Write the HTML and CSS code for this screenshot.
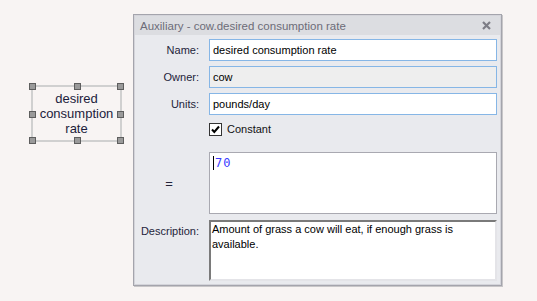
FILE: index.html
```html
<!DOCTYPE html>
<html>
<head>
<meta charset="utf-8">
<link rel="stylesheet" href="styles.css">
</head>
<body>
<div class="canvas">
  <div class="node">
    <div class="node-label">desired<br>consumption<br>rate</div>
    <span class="h h-tl"></span><span class="h h-tc"></span><span class="h h-tr"></span>
    <span class="h h-ml"></span><span class="h h-mr"></span>
    <span class="h h-bl"></span><span class="h h-bc"></span><span class="h h-br"></span>
  </div>

  <div class="dialog">
    <div class="titlebar">
      <span class="title">Auxiliary - cow.desired consumption rate</span>
      <svg class="close" width="9" height="9" viewBox="0 0 9 9"><path d="M1 1 L8 8 M8 1 L1 8" stroke="#7d7d86" stroke-width="2.2" fill="none"/></svg>
    </div>
    <div class="form">
      <label class="lbl">Name:</label>
      <div class="field blue">desired consumption rate</div>

      <label class="lbl">Owner:</label>
      <div class="field blue ro">cow</div>

      <label class="lbl">Units:</label>
      <div class="field blue">pounds/day</div>

      <span></span>
      <div class="check-row">
        <svg class="checkbox" width="13" height="13" viewBox="0 0 13 13"><rect x="0.5" y="0.5" width="12" height="12" fill="#fff" stroke="#333"/><path d="M3 6.5 L5.3 9 L10 3.5" stroke="#000" stroke-width="2" fill="none"/></svg>
        <span>Constant</span>
      </div>

      <label class="lbl eq-lbl">=</label>
      <div class="eq"><span class="caret"></span><span class="eq-text">70</span></div>

      <label class="lbl desc-lbl">Description:</label>
      <div class="desc">Amount of grass a cow will eat, if enough grass is available.</div>
    </div>
  </div>
</div>
</body>
</html>
```

FILE: styles.css
```css
html, body {
  margin: 0;
  padding: 0;
  background: #f8f4f3;
}
body {
  width: 537px;
  height: 301px;
  overflow: hidden;
  font-family: "Liberation Sans", Arial, sans-serif;
}
.canvas {
  position: relative;
  width: 537px;
  height: 301px;
}
.node {
  position: absolute;
  left: 31px;
  top: 85px;
  width: 91px;
  height: 57px;
  box-sizing: border-box;
  border: 2px solid #d0d0d0;
  display: flex;
  align-items: center;
  justify-content: center;
}
.node-label {
  font-size: 13px;
  line-height: 15px;
  color: #1c1c3c;
  text-align: center;
}
.h {
  position: absolute;
  width: 5px;
  height: 5px;
  border: 1px solid #5e5e5e;
  background: #9a9a9a;
}
.h-tl { left: -4px; top: -4px; }
.h-tc { left: 41px; top: -4px; }
.h-tr { right: -4px; top: -4px; }
.h-ml { left: -4px; top: 24px; }
.h-mr { right: -4px; top: 24px; }
.h-bl { left: -4px; bottom: -4px; }
.h-bc { left: 41px; bottom: -4px; }
.h-br { right: -4px; bottom: -4px; }

.dialog {
  position: absolute;
  left: 133px;
  top: 14px;
  width: 369px;
  height: 272px;
  box-sizing: border-box;
  border: 1px solid #a4a4ac;
  box-shadow: inset 0 0 0 1px #d4d4da, 1px 1px 0 #c8c6c8;
  background: #e9eaee;
  display: flex;
  flex-direction: column;
}
.titlebar {
  height: 19px;
  margin: 1px 1px 0 1px;
  background: #dcdde1;
  display: flex;
  align-items: center;
  justify-content: space-between;
  padding: 0 9px 0 5px;
}
.title {
  font-size: 11.5px;
  color: #6c6c78;
}
.close {
  display: block;
}
.form {
  display: grid;
  grid-template-columns: 64px 1fr;
  column-gap: 10px;
  row-gap: 5px;
  padding: 4px 4px 0 1px;
  font-size: 11px;
}
.lbl {
  color: #24243a;
  text-align: right;
  align-self: center;
}
.field {
  height: 22px;
  box-sizing: border-box;
  background: #fff;
  border: 1px solid #86b6e6;
  padding: 0 3px;
  display: flex;
  align-items: center;
  color: #000;
}
.field.ro {
  background: #eeeeee;
}
.check-row {
  height: 18px;
  display: flex;
  align-items: center;
  gap: 5px;
  color: #111;
}
.checkbox {
  display: block;
}
.eq-lbl {
  margin-top: 9px;
  font-size: 13px;
  text-align: center;
  padding-left: 4px;
}
.eq {
  margin-top: 9px;
  height: 62px;
  box-sizing: border-box;
  background: #fff;
  border: 1px solid #a9a9b1;
  position: relative;
  padding: 2px 0 0 3px;
  display: flex;
  align-items: flex-start;
}
.caret {
  width: 1px;
  height: 14px;
  background: #000;
  margin-top: 1px;
}
.eq-text {
  font-family: "DejaVu Sans Mono", monospace;
  font-size: 12px;
  color: #3c3cff;
  line-height: 16px;
  margin-left: 1px;
  letter-spacing: 1px;
}
.desc-lbl {
  margin-top: 1px;
  align-self: start;
  padding-top: 5px;
}
.desc {
  margin-top: 1px;
  height: 61px;
  box-sizing: border-box;
  background: #fff;
  border-top: 2px solid #7a7a7a;
  border-left: 2px solid #7a7a7a;
  border-right: 2px solid #e4e4e8;
  border-bottom: 2px solid #e4e4e8;
  padding: 0 2px 0 1px;
  line-height: 15px;
  color: #000;
}
```
